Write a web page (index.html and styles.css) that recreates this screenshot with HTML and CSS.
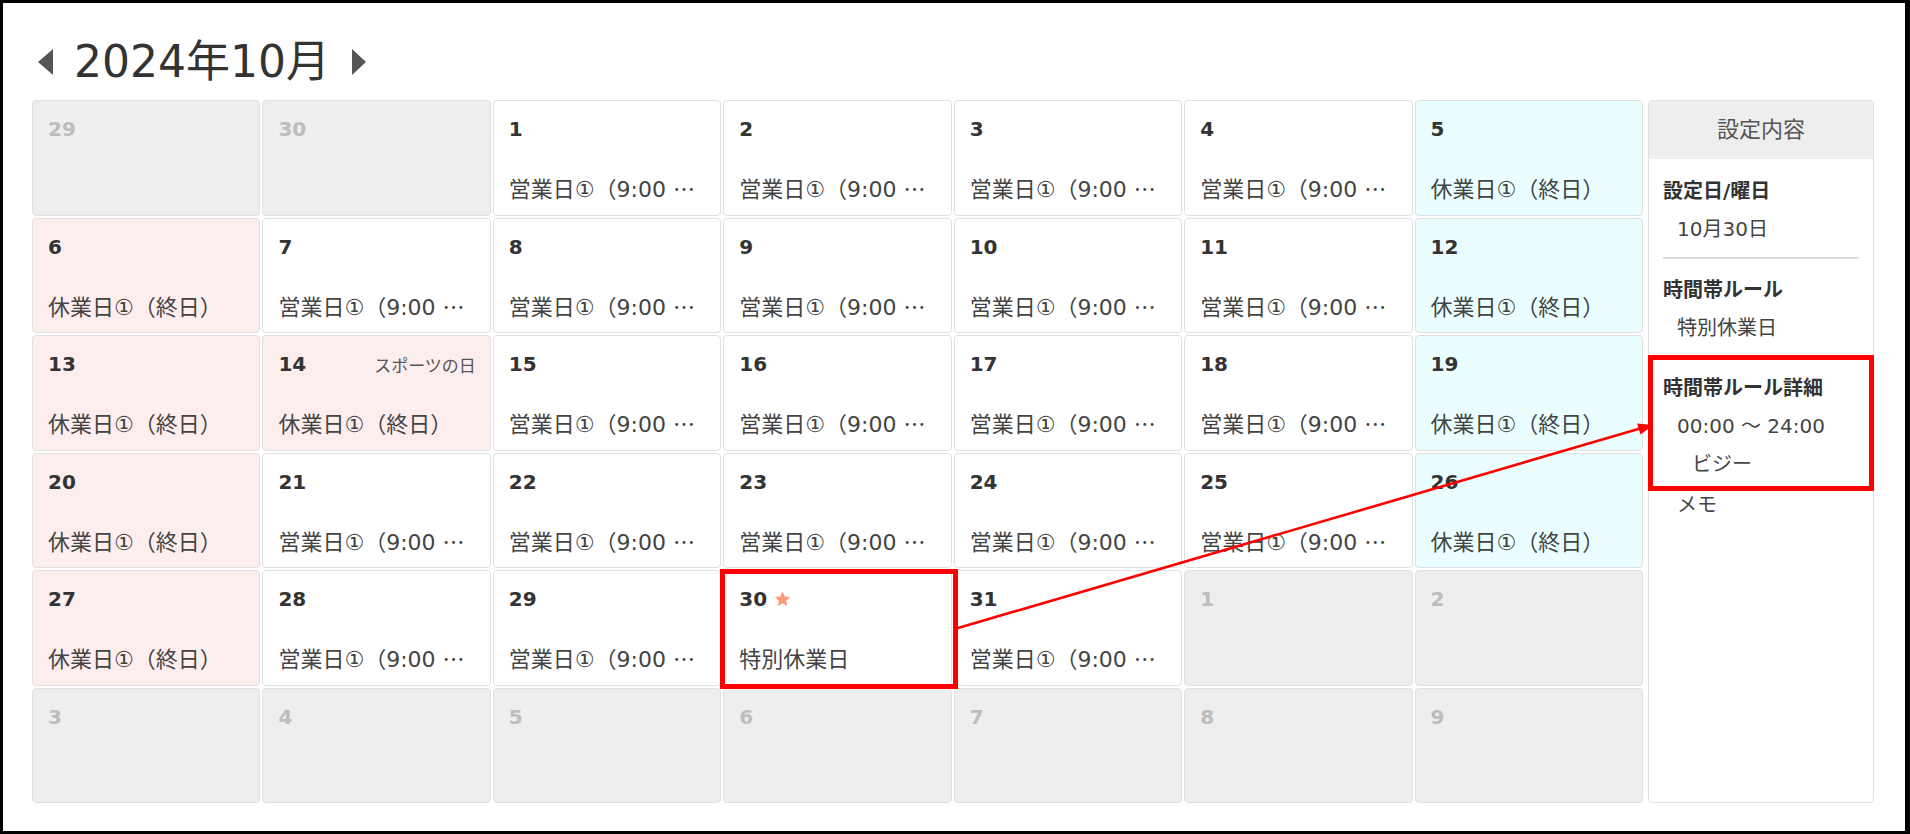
FILE: index.html
```html
<!DOCTYPE html>
<html lang="ja">
<head>
  <meta charset="UTF-8">
  <title>営業カレンダー 2024年10月</title>
  <link rel="stylesheet" href="styles.css">
</head>
<body>
  <div class="frame">
    <div class="month-nav">
      <span class="nav-arrow prev"></span>
      <h1 class="month-title">2024年10月</h1>
      <span class="nav-arrow next"></span>
    </div>

    <div class="calendar">
      <div class="month-grid">
        <!-- week 1 -->
        <div class="day other"><div class="day-head"><span class="day-num">29</span></div></div>
        <div class="day other"><div class="day-head"><span class="day-num">30</span></div></div>
        <div class="day"><div class="day-head"><span class="day-num">1</span></div><div class="event"><span>営業日①（9:00 ～ 18:00）</span></div></div>
        <div class="day"><div class="day-head"><span class="day-num">2</span></div><div class="event"><span>営業日①（9:00 ～ 18:00）</span></div></div>
        <div class="day"><div class="day-head"><span class="day-num">3</span></div><div class="event"><span>営業日①（9:00 ～ 18:00）</span></div></div>
        <div class="day"><div class="day-head"><span class="day-num">4</span></div><div class="event"><span>営業日①（9:00 ～ 18:00）</span></div></div>
        <div class="day sat"><div class="day-head"><span class="day-num">5</span></div><div class="event"><span>休業日①（終日）</span></div></div>
        <!-- week 2 -->
        <div class="day sun"><div class="day-head"><span class="day-num">6</span></div><div class="event"><span>休業日①（終日）</span></div></div>
        <div class="day"><div class="day-head"><span class="day-num">7</span></div><div class="event"><span>営業日①（9:00 ～ 18:00）</span></div></div>
        <div class="day"><div class="day-head"><span class="day-num">8</span></div><div class="event"><span>営業日①（9:00 ～ 18:00）</span></div></div>
        <div class="day"><div class="day-head"><span class="day-num">9</span></div><div class="event"><span>営業日①（9:00 ～ 18:00）</span></div></div>
        <div class="day"><div class="day-head"><span class="day-num">10</span></div><div class="event"><span>営業日①（9:00 ～ 18:00）</span></div></div>
        <div class="day"><div class="day-head"><span class="day-num">11</span></div><div class="event"><span>営業日①（9:00 ～ 18:00）</span></div></div>
        <div class="day sat"><div class="day-head"><span class="day-num">12</span></div><div class="event"><span>休業日①（終日）</span></div></div>
        <!-- week 3 -->
        <div class="day sun"><div class="day-head"><span class="day-num">13</span></div><div class="event"><span>休業日①（終日）</span></div></div>
        <div class="day sun"><div class="day-head"><span class="day-num">14</span><span class="holiday">スポーツの日</span></div><div class="event"><span>休業日①（終日）</span></div></div>
        <div class="day"><div class="day-head"><span class="day-num">15</span></div><div class="event"><span>営業日①（9:00 ～ 18:00）</span></div></div>
        <div class="day"><div class="day-head"><span class="day-num">16</span></div><div class="event"><span>営業日①（9:00 ～ 18:00）</span></div></div>
        <div class="day"><div class="day-head"><span class="day-num">17</span></div><div class="event"><span>営業日①（9:00 ～ 18:00）</span></div></div>
        <div class="day"><div class="day-head"><span class="day-num">18</span></div><div class="event"><span>営業日①（9:00 ～ 18:00）</span></div></div>
        <div class="day sat"><div class="day-head"><span class="day-num">19</span></div><div class="event"><span>休業日①（終日）</span></div></div>
        <!-- week 4 -->
        <div class="day sun"><div class="day-head"><span class="day-num">20</span></div><div class="event"><span>休業日①（終日）</span></div></div>
        <div class="day"><div class="day-head"><span class="day-num">21</span></div><div class="event"><span>営業日①（9:00 ～ 18:00）</span></div></div>
        <div class="day"><div class="day-head"><span class="day-num">22</span></div><div class="event"><span>営業日①（9:00 ～ 18:00）</span></div></div>
        <div class="day"><div class="day-head"><span class="day-num">23</span></div><div class="event"><span>営業日①（9:00 ～ 18:00）</span></div></div>
        <div class="day"><div class="day-head"><span class="day-num">24</span></div><div class="event"><span>営業日①（9:00 ～ 18:00）</span></div></div>
        <div class="day"><div class="day-head"><span class="day-num">25</span></div><div class="event"><span>営業日①（9:00 ～ 18:00）</span></div></div>
        <div class="day sat"><div class="day-head"><span class="day-num">26</span></div><div class="event"><span>休業日①（終日）</span></div></div>
        <!-- week 5 -->
        <div class="day sun"><div class="day-head"><span class="day-num">27</span></div><div class="event"><span>休業日①（終日）</span></div></div>
        <div class="day"><div class="day-head"><span class="day-num">28</span></div><div class="event"><span>営業日①（9:00 ～ 18:00）</span></div></div>
        <div class="day"><div class="day-head"><span class="day-num">29</span></div><div class="event"><span>営業日①（9:00 ～ 18:00）</span></div></div>
        <div class="day selected">
          <div class="day-head">
            <span class="day-num">30<svg class="star" width="17" height="16" viewBox="0 0 24 23"><path d="M12 0.8l3.3 7 7.6 0.9-5.6 5.2 1.5 7.6L12 17.7l-6.8 3.8 1.5-7.6L1.1 8.7l7.6-0.9z" fill="#ff9a78"/></svg></span>
          </div>
          <div class="event"><span>特別休業日</span></div>
        </div>
        <div class="day"><div class="day-head"><span class="day-num">31</span></div><div class="event"><span>営業日①（9:00 ～ 18:00）</span></div></div>
        <div class="day other"><div class="day-head"><span class="day-num">1</span></div></div>
        <div class="day other"><div class="day-head"><span class="day-num">2</span></div></div>
        <!-- week 6 -->
        <div class="day other"><div class="day-head"><span class="day-num">3</span></div></div>
        <div class="day other"><div class="day-head"><span class="day-num">4</span></div></div>
        <div class="day other"><div class="day-head"><span class="day-num">5</span></div></div>
        <div class="day other"><div class="day-head"><span class="day-num">6</span></div></div>
        <div class="day other"><div class="day-head"><span class="day-num">7</span></div></div>
        <div class="day other"><div class="day-head"><span class="day-num">8</span></div></div>
        <div class="day other"><div class="day-head"><span class="day-num">9</span></div></div>
      </div>

      <aside class="panel">
        <div class="panel-head">設定内容</div>
        <div class="panel-body">
          <div class="field-label">設定日/曜日</div>
          <div class="field-value">10月30日</div>
          <hr>
          <div class="field-label">時間帯ルール</div>
          <div class="field-value">特別休業日</div>
          <div class="detail-box">
            <div class="field-label">時間帯ルール詳細</div>
            <div class="field-value">00:00 ～ 24:00</div>
            <div class="field-value sub">ビジー</div>
          </div>
          <div class="memo">メモ</div>
        </div>
      </aside>
    </div>
  </div>

  <!-- callout arrow from the selected day to the detail box -->
  <svg class="callout" width="1910" height="834" viewBox="0 0 1910 834">
    <line x1="958" y1="628" x2="1640" y2="428.5" stroke="#f00" stroke-width="2.6"/>
    <polygon points="1653,425 1637,423.5 1640.5,434.5" fill="#f00"/>
  </svg>
</body>
</html>
```

FILE: styles.css
```css
* {
  box-sizing: border-box;
}
html, body {
  margin: 0;
}
body {
  position: relative;
  background: #fff;
  font-family: "DejaVu Sans", "Noto Sans CJK JP", sans-serif;
  color: #333;
}
.frame {
  height: 834px;
  border: 3px solid #000;
  border-right-width: 5px;
  padding: 31px 31px 0 29px;
}

/* month header */
.month-nav {
  display: flex;
  align-items: center;
  height: 56px;
  margin-bottom: 10px;
  padding-left: 6px;
}
.nav-arrow {
  width: 0;
  height: 0;
  border-top: 13px solid transparent;
  border-bottom: 13px solid transparent;
}
.nav-arrow.prev {
  border-right: 15px solid #555;
}
.nav-arrow.next {
  border-left: 14px solid #555;
}
.month-title {
  margin: 0 22px 0 21px;
  font-size: 44px;
  font-weight: normal;
  line-height: 56px;
  color: #333;
}

/* calendar */
.calendar {
  display: flex;
  height: 703px;
}
.month-grid {
  flex: 1;
  display: grid;
  grid-template-columns: repeat(7, 1fr);
  grid-template-rows: repeat(6, 1fr);
  gap: 2px;
}
.day {
  min-width: 0;
  background: #fff;
  border: 1px solid #e0e0e0;
  border-radius: 4px;
  padding: 11px 14px 0 15px;
}
.day.other {
  background: #eee;
}
.day.sun {
  background: #fdeeee;
}
.day.sat {
  background: #ebfeff;
}
.day.selected {
  position: relative;
}
.day.selected::after {
  content: "";
  position: absolute;
  top: -2px;
  right: -7px;
  bottom: -4px;
  left: -4px;
  border: 5px solid #f00;
}
.day-head {
  display: flex;
  align-items: center;
  justify-content: space-between;
  height: 34px;
}
.day-num {
  display: inline-flex;
  align-items: center;
  font-size: 20px;
  font-weight: bold;
  color: #333;
}
.day.other .day-num {
  color: #bdbdbd;
}
.star {
  margin-left: 7px;
}
.holiday {
  font-size: 17px;
  color: #555;
}
/* the ellipsis takes the block's font, so it gets the centred Japanese dots */
.event {
  margin-top: 26px;
  font-family: "Noto Sans CJK JP", sans-serif;
  font-size: 22px;
  line-height: 30px;
  color: #444;
  white-space: nowrap;
  overflow: hidden;
  text-overflow: ellipsis;
}
.event span {
  font-family: "DejaVu Sans", "Noto Sans CJK JP", sans-serif;
}

/* side panel */
.panel {
  width: 226px;
  margin-left: 5px;
  background: #fff;
  border: 1px solid #e0e0e0;
  border-radius: 4px;
}
.panel-head {
  height: 58px;
  line-height: 58px;
  background: #eee;
  border-radius: 3px 3px 0 0;
  text-align: center;
  font-size: 22px;
  color: #555;
}
.panel-body {
  padding: 13px 14px 0;
}
.field-label {
  font-size: 20px;
  font-weight: bold;
  line-height: 38px;
  color: #333;
}
.field-value {
  font-size: 20px;
  line-height: 38px;
  padding-left: 14px;
  color: #444;
}
.field-value.sub {
  padding-left: 29px;
}
.panel hr {
  border: 0;
  border-top: 2px solid #ddd;
  margin: 9px 0 12px;
}
.detail-box {
  margin: 8px -15px 0;
  border: 5px solid #f00;
  padding: 9px 10px 3px;
}
.memo {
  font-size: 20px;
  line-height: 28px;
  padding-left: 14px;
  color: #444;
}

.callout {
  position: absolute;
  top: 0;
  left: 0;
  pointer-events: none;
}
```
